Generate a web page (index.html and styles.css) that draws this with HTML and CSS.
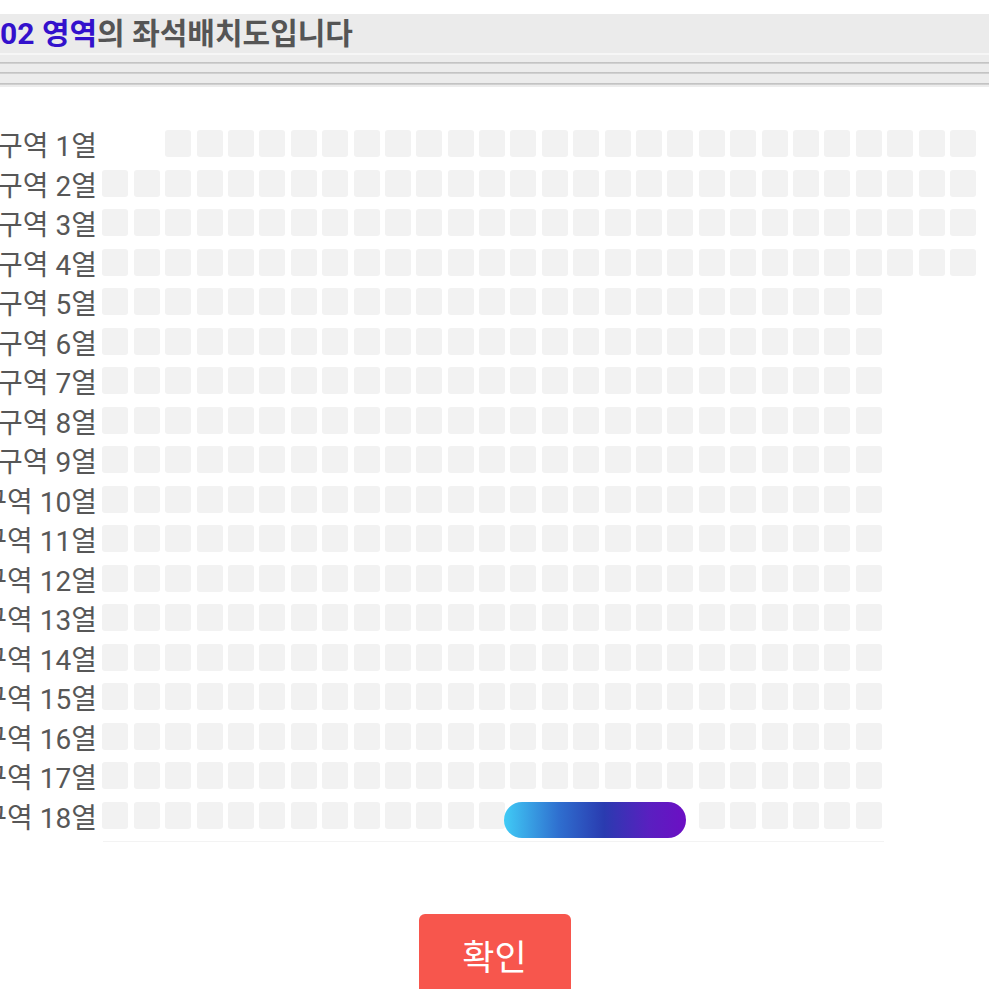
FILE: index.html
```
<!DOCTYPE html>
<html lang="ko">
<head>
  <meta charset="UTF-8" />
  <meta name="viewport" content="width=device-width, initial-scale=1.0"/>
  <title>좌석배치도</title>
  <link rel="stylesheet" href="styles.css">
</head>
<body>

  <div class="title-bar">
    <span class="area-name">02 영역</span>의 좌석배치도입니다
  </div>
  <div class="title-rule"></div>

  <!-- Seat map, rows are filled in below -->
  <div class="seat-grid" id="seatGrid"></div>
  <div class="seat-base"></div>

  <div class="actions">
    <button class="confirm-btn">확인</button>
  </div>

  <script>
    const grid = document.getElementById('seatGrid');

    function addSeat(col) {
      const seat = document.createElement('div');
      seat.className = 'seat';
      if (col) seat.style.gridColumnStart = col;
      grid.appendChild(seat);
    }

    for (let row = 1; row <= 18; row++) {
      const label = document.createElement('div');
      label.className = 'row-label';
      label.innerText = '구역 ' + row + '열';
      grid.appendChild(label);

      const first = row === 1 ? 3 : 1;
      const last = row <= 4 ? 28 : 25;

      for (let s = first; s <= last; s++) {
        // selected block on the last row
        if (row === 18 && s >= 14 && s <= 19) {
          if (s === 14) {
            const bar = document.createElement('div');
            bar.className = 'selected-bar';
            grid.appendChild(bar);
          }
          continue;
        }
        addSeat(s === first ? s + 1 : null);
      }
    }
  </script>

</body>
</html>
```

FILE: styles.css
```
body {
  margin: 0;
  background: #fff;
  font-family: Roboto, "Noto Sans CJK KR", sans-serif;
  overflow: hidden;
}

.title-bar {
  margin-top: 14px;
  height: 39px;
  line-height: 40px;
  background: #ebebeb;
  font-size: 30px;
  font-weight: bold;
  color: #555;
  white-space: nowrap;
}

.area-name {
  color: #3311cc;
}

.title-rule {
  height: 32px;
  border-top: 2px solid #f6f6f6;
  background:
    linear-gradient(#bdbdbd, #d6d6d6) 0 7px / 100% 2px no-repeat,
    linear-gradient(#bdbdbd, #d6d6d6) 0 17px / 100% 2px no-repeat,
    linear-gradient(#bdbdbd, #d6d6d6) 0 28px / 100% 2px no-repeat,
    #ececec;
}

.seat-grid {
  display: grid;
  grid-template-columns: 120px repeat(28, 26px);
  grid-auto-rows: 27px;
  column-gap: 5.4px;
  row-gap: 12.5px;
  margin-top: 43px;
  margin-left: -23px;
}

.row-label {
  grid-column-start: 1;
  text-align: right;
  white-space: nowrap;
  font-size: 28px;
  line-height: 33px;
  height: 27px;
  color: #575757;
}

.seat {
  background: #f2f2f2;
  border-radius: 3px;
}

.selected-bar {
  grid-column: span 6;
  justify-self: start;
  width: 182px;
  height: 36px;
  margin-left: -6px;
  margin-bottom: -9px;
  border-radius: 18px;
  background: linear-gradient(90deg, #40cbf6 0%, #2f6fcf 30%, #2a3bb0 55%, #5a1fc0 80%, #6c0fc4 100%);
}

.seat-base {
  width: 781px;
  height: 1px;
  margin: 12px 0 0 103px;
  background: #f3f3f3;
}

.actions {
  display: flex;
  justify-content: center;
  margin-top: 72px;
}

.confirm-btn {
  width: 152px;
  height: 90px;
  border: none;
  border-radius: 6px;
  background: #f7564d;
  color: #fff;
  font-family: Roboto, "Noto Sans CJK KR", sans-serif;
  font-size: 35px;
  line-height: 90px;
  padding: 0;
}
```
